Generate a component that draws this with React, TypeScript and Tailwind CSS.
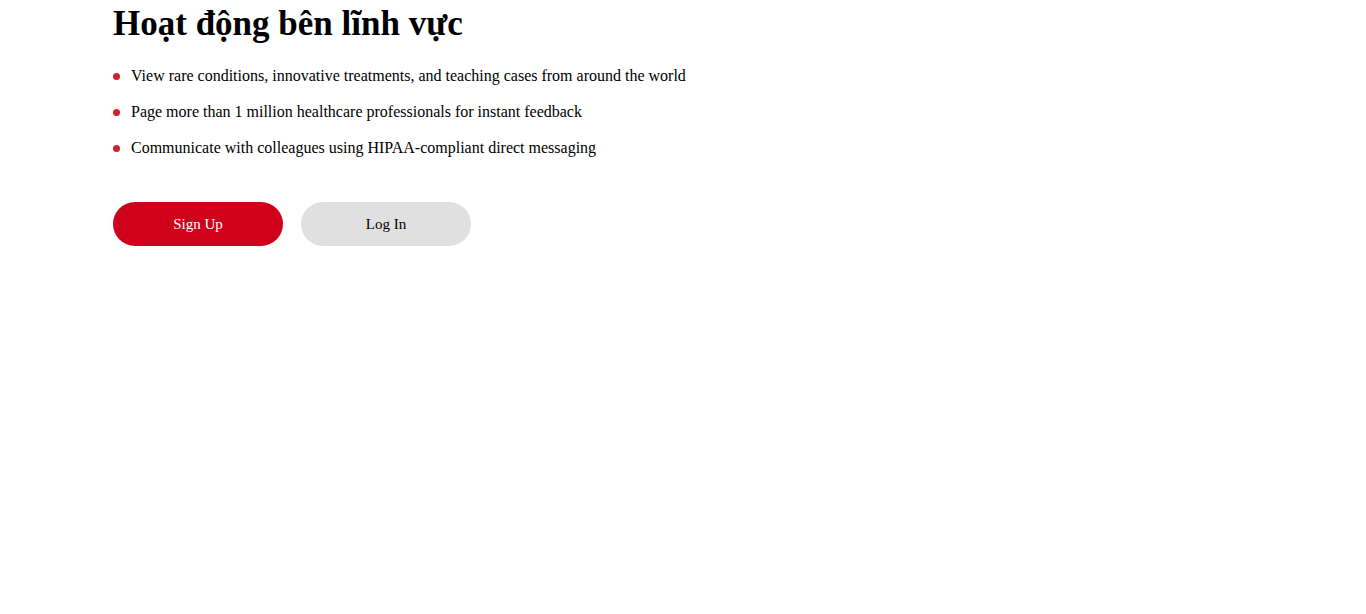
export default function App() {
  const items = [
    "View rare conditions, innovative treatments, and teaching cases from around the world",
    "Page more than 1 million healthcare professionals for instant feedback",
    "Communicate with colleagues using HIPAA-compliant direct messaging",
  ];
  return (
    <div className="min-h-[614px] bg-white font-['Liberation_Serif',serif] text-black">
      <div className="pl-[113px] pt-[4px]">
        <h1 className="text-[35px] font-bold leading-[40px]">Hoạt động bên lĩnh vực</h1>
        <ul className="mt-[23px] flex flex-col gap-[18px]">
          {items.map((t) => (
            <li key={t} className="flex items-center gap-[11px] text-[16px] leading-[18px]">
              <span className="h-[7px] w-[7px] rounded-full bg-[#d81e2a]" />
              <span>{t}</span>
            </li>
          ))}
        </ul>
        <div className="mt-[45px] flex gap-[18px]">
          <button className="h-[44px] w-[170px] rounded-full bg-[#d0021b] text-[15px] text-white">Sign Up</button>
          <button className="h-[44px] w-[170px] rounded-full bg-[#e0e0e0] text-[15px] text-black">Log In</button>
        </div>
      </div>
    </div>
  );
}
